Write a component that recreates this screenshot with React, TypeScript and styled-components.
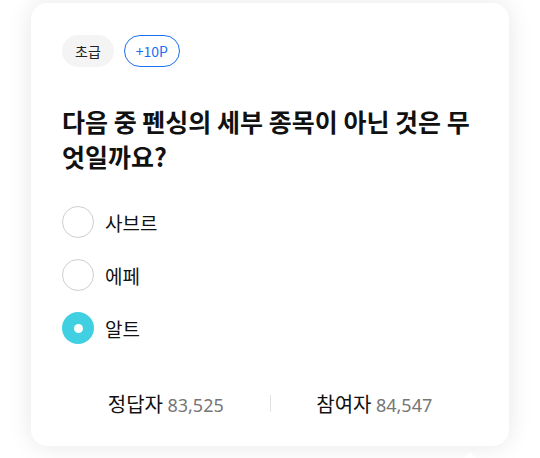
import React from "react";
import styled, { createGlobalStyle } from "styled-components";

const Global = createGlobalStyle`
  html, body { margin: 0; padding: 0; background: #ffffff; }
  body { font-family: "Noto Sans CJK KR", "Noto Sans", sans-serif; color: #111; overflow: hidden; }
  * { box-sizing: border-box; }
`;

const Page = styled.div`
  position: relative;
  width: 540px;
  height: 458px;
  padding: 3px 0 0 31px;
`;

const Card = styled.section`
  width: 478px;
  height: 443px;
  background: #fff;
  border-radius: 16px;
  box-shadow: 0 0 24px rgba(0, 0, 0, 0.1);
  padding: 32px 31px 0 31px;
  display: flex;
  flex-direction: column;
`;

const Chips = styled.div`
  display: flex;
  gap: 10px;
`;

const Chip = styled.span<{ $outline?: boolean }>`
  height: 32px;
  border-radius: 16px;
  padding: 0 ${(p) => (p.$outline ? "11px" : "12px")};
  display: inline-flex;
  align-items: center;
  font-size: 14px;
  background: ${(p) => (p.$outline ? "#fff" : "#f4f4f4")};
  border: ${(p) => (p.$outline ? "1px solid #1a6ff0" : "1px solid #f4f4f4")};
  color: ${(p) => (p.$outline ? "#1a6ff0" : "#222")};
`;

const Title = styled.h2`
  margin: 37px 0 0;
  font-size: 25px;
  line-height: 35px;
  font-weight: 700;
  color: #111;
`;

const Options = styled.ul`
  list-style: none;
  margin: 32px 0 0;
  padding: 0;
  display: flex;
  flex-direction: column;
  gap: 21px;
`;

const Option = styled.li`
  display: flex;
  align-items: center;
  gap: 11px;
  height: 32px;
  font-size: 19px;
  color: #111;
`;

const Radio = styled.span<{ $checked?: boolean }>`
  width: 32px;
  height: 32px;
  border-radius: 50%;
  flex: none;
  display: flex;
  align-items: center;
  justify-content: center;
  border: ${(p) => (p.$checked ? "none" : "1.5px solid #cfcfcf")};
  background: ${(p) => (p.$checked ? "#40d0e2" : "#fff")};
  &::after {
    content: "";
    display: ${(p) => (p.$checked ? "block" : "none")};
    width: 9px;
    height: 9px;
    border-radius: 50%;
    background: #fff;
  }
`;

const Stats = styled.div`
  margin-top: 45px;
  display: flex;
  align-items: center;
  height: 28px;
`;

const Stat = styled.div`
  flex: 1;
  text-align: center;
  font-size: 20px;
  color: #111;
  white-space: nowrap;
`;

const Num = styled.span`
  color: #767676;
  font-family: "Noto Sans", sans-serif;
  font-size: 18px;
  font-weight: 400;
`;

const Divider = styled.span`
  width: 1px;
  height: 17px;
  background: #e2e2e2;
`;

const Arrow = styled.span`
  position: absolute;
  left: 464px;
  top: 452px;
  width: 0;
  height: 0;
  border-left: 6px solid transparent;
  border-right: 6px solid transparent;
  border-bottom: 6px solid #fff;
`;

export default function App() {
  const options = [
    { label: "사브르", checked: false },
    { label: "에페", checked: false },
    { label: "알트", checked: true },
  ];
  return (
    <>
      <Global />
      <Page>
        <Card>
          <Chips>
            <Chip>초급</Chip>
            <Chip $outline>+10P</Chip>
          </Chips>
          <Title>다음 중 펜싱의 세부 종목이 아닌 것은 무엇일까요?</Title>
          <Options>
            {options.map((o) => (
              <Option key={o.label}>
                <Radio $checked={o.checked} />
                {o.label}
              </Option>
            ))}
          </Options>
          <Stats>
            <Stat>
              정답자 <Num>83,525</Num>
            </Stat>
            <Divider />
            <Stat>
              참여자 <Num>84,547</Num>
            </Stat>
          </Stats>
        </Card>
        <Arrow />
      </Page>
    </>
  );
}
